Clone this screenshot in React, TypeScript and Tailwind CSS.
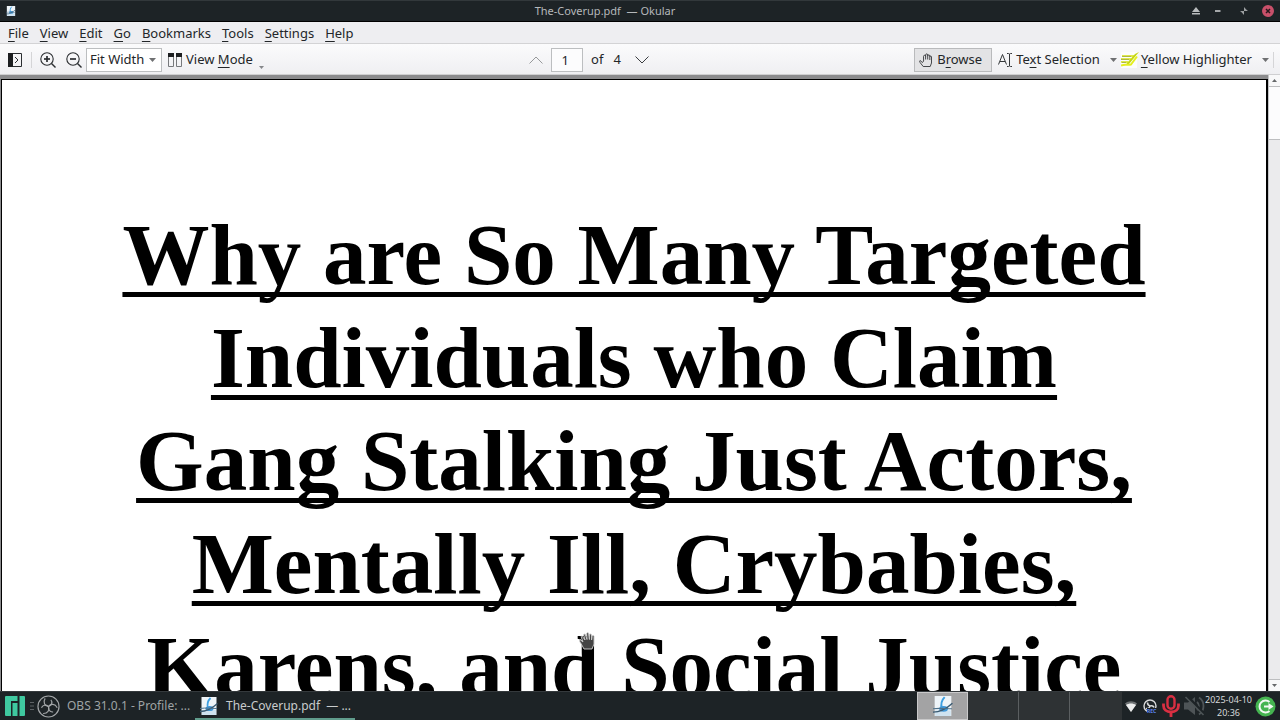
import { useState } from "react";
import type { ReactNode } from "react";

const menus = ["File", "View", "Edit", "Go", "Bookmarks", "Tools", "Settings", "Help"];

const titleLines = [
  "Why are So Many Targeted",
  "Individuals who Claim",
  "Gang Stalking Just Actors,",
  "Mentally Ill, Crybabies,",
  "Karens, and Social Justice",
];

function Key({ children }: { children: ReactNode }) {
  return (
    <span className="underline decoration-1 underline-offset-3 [text-decoration-skip-ink:none]">
      {children}
    </span>
  );
}

function Caret() {
  return (
    <svg width="7" height="4" viewBox="0 0 7 4" fill="#6f7072">
      <path d="M0 0h7L3.5 4z" />
    </svg>
  );
}

function OkularIcon({ size }: { size: number }) {
  return (
    <svg className="shrink-0" width={size} height={size} viewBox="0 0 18 18">
      <path d="M1.500 0h15v18h-15z" fill="#eef4f8" />
      <path d="M2 13h14v5H2z" fill="#cfe2ef" />
      <path d="M10.500 1C7.500 4 7 8 8 11.500" fill="none" stroke="#3d9fe0" strokeWidth="1.800" />
      <ellipse cx="9.500" cy="11.500" rx="4" ry="2.600" fill="#3f97d8" />
      <path d="M0 14.500c6 0 12-3 17.500-8" fill="none" stroke="#3a5a72" strokeWidth="1.300" />
      <path d="M0 11.500c6-1 11 0 17 0" fill="none" stroke="#4d7089" strokeWidth="1" />
    </svg>
  );
}

function ObsIcon({ size, color }: { size: number; color: string }) {
  return (
    <svg className="shrink-0" width={size} height={size} viewBox="0 0 24 24" fill="none" stroke={color} strokeWidth="1.200">
      <circle cx="12" cy="12" r="11" />
      {[0, 120, 240].map((a) => (
        <path key={a} transform={`rotate(${a} 12 12)`} d="M12 12c-4-.5-6-4.500-3.500-8.500M12 12c3.500-1.500 4.500-4.500 2.500-7" />
      ))}
    </svg>
  );
}

function ZoomIcon({ plus }: { plus?: boolean }) {
  return (
    <svg width="16" height="16" viewBox="0 0 16 16" fill="none" stroke="#2b2e31">
      <circle cx="7" cy="7" r="6.200" strokeWidth="1.100" />
      <path d="M11.500 11.500l4 4" strokeWidth="1.400" />
      <path d="M4 7h6" strokeWidth="1.700" />
      {plus && <path d="M7 4v6" strokeWidth="1.700" />}
    </svg>
  );
}

function TitleBar() {
  return (
    <header className="flex h-[22px] shrink-0 items-center border-t border-b border-t-[#32383b] border-b-black bg-[#1d2326] px-1.5">
      <div className="w-16">
        <OkularIcon size={10} />
      </div>
      <h1 className="flex-1 text-center text-[11px] whitespace-pre text-[#b5b8ba]">The-Coverup.pdf  — Okular</h1>
      <div className="flex w-[134px] items-center justify-end gap-3.5">
        <button aria-label="Keep above">
          <svg width="8" height="8" viewBox="0 0 8 8" fill="#b8bbbd">
            <path d="M4 0l4 5H0zM0 6h8v1.500H0z" />
          </svg>
        </button>
        <button aria-label="Minimize">
          <svg width="8" height="8" viewBox="0 0 8 8" fill="#a4a7a9">
            <path d="M1 3h5.500v2H1z" />
          </svg>
        </button>
        <button aria-label="Restore" className="ml-1">
          <svg width="8" height="8" viewBox="0 0 8 8" fill="#9c9fa1">
            <path d="M4 0v4h4L6.500 2.700 5.300 1.500zM4 8V4H0l1.500 1.300 1.200 1.200z" />
          </svg>
        </button>
        <button aria-label="Close">
          <svg width="12" height="12" viewBox="0 0 12 12">
            <circle cx="6" cy="6" r="6" fill="#c8506a" />
            <path d="M4 4l4 4M8 4L4 8" stroke="#26181c" strokeWidth="1.500" />
          </svg>
        </button>
      </div>
    </header>
  );
}

function MenuBar() {
  return (
    <nav className="flex h-[22px] shrink-0 items-center gap-[11px] border-b border-[#d3d3d5] bg-[#eeeef1] px-2 pt-0.5 text-[13px] text-[#232629]">
      {menus.map((m) => (
        <button key={m}>
          <Key>{m[0]}</Key>
          {m.slice(1)}
        </button>
      ))}
    </nav>
  );
}

function ToolBar() {
  const [page, setPage] = useState("1");

  return (
    <div className="flex h-[31px] shrink-0 items-center justify-between border-b border-[#cfcfd1] bg-linear-to-b from-[#fbfbfc] to-[#efeff2] pt-0.5 pr-1.5 pl-2 text-[13px] text-[#232629]">
      <div className="flex items-center">
        <button aria-label="Show sidebar">
          <svg width="15" height="14" viewBox="0 0 15 14" fill="none" stroke="#2b2e31">
            <path d="M.5.5h13v13H.5z" />
            <path d="M0 0h5v14H0z" fill="#1c1e20" stroke="none" />
            <path d="M7 4l3 3-3 3" />
          </svg>
        </button>
        <span className="mx-2 h-4 w-px bg-[#d5d5d7]" />
        <button aria-label="Zoom in">
          <ZoomIcon plus />
        </button>
        <button aria-label="Zoom out" className="ml-2.5">
          <ZoomIcon />
        </button>
        <div className="relative ml-1 flex items-center">
          <select
            aria-label="Zoom"
            className="h-6 w-[76px] appearance-none border border-[#bcbec0] bg-white pl-[3px] outline-none"
          >
            <option>Fit Width</option>
            <option>Fit Page</option>
            <option>100%</option>
          </select>
          <span className="pointer-events-none absolute right-1.5">
            <Caret />
          </span>
        </div>
        <button className="ml-1.5 flex items-center gap-1">
          <svg width="14" height="14" viewBox="0 0 14 14" fill="none" stroke="#77797c">
            <path d="M.5.5h5v13h-5zM8.500.5h5v13h-5z" />
            <path d="M0 0h6v4H0zM8 0h6v4H8z" fill="#1c1e20" stroke="none" />
          </svg>
          <span>
            View <Key>M</Key>ode
          </span>
        </button>
        <svg className="mt-3.5 ml-1.5" width="5" height="3" viewBox="0 0 5 3" fill="#85878a">
          <path d="M0 0h5L2.500 3z" />
        </svg>
      </div>

      <div className="flex items-center">
        <button aria-label="Previous page">
          <svg width="14" height="8" viewBox="0 0 14 8" fill="none" stroke="#97999b">
            <path d="M.5 7.500L7 1l6.500 6.500" />
          </svg>
        </button>
        <input
          aria-label="Page"
          value={page}
          onChange={(e) => setPage(e.target.value)}
          className="mr-2 ml-2 h-6 w-8 border border-[#bcbec0] bg-[#fcfcfd] pr-1 text-center outline-none"
        />
        <span>of</span>
        <span className="mr-3.5 ml-2.5">4</span>
        <button aria-label="Next page">
          <svg width="14" height="8" viewBox="0 0 14 8" fill="none" stroke="#3a3d40">
            <path d="M.5.5L7 7 13.500.5" />
          </svg>
        </button>
      </div>

      <div className="flex items-center">
        <button className="mr-1.5 flex h-6 w-[78px] items-center gap-1 border border-[#b9babc] bg-[#e3e3e5] pl-1">
          <svg width="14" height="15" viewBox="0 0 14 15" fill="none" stroke="#34373a" strokeWidth=".9" strokeLinejoin="round">
            <path d="M3.500 9.500L1 7.500C.3 8 .4 8.700 1 9.400l3.200 4.100h7L12.500 10V4c0-1.300-1.700-1.300-1.700 0V3c0-1.500-2.100-1.500-2.100 0V2c0-1.500-2.100-1.500-2.100 0v1.200c-.2-1.300-2.100-1.200-2.100.2l.1 4.600z" />
            <path d="M6.600 3v3.500M8.700 3v3.500M10.800 4v3" />
          </svg>
          <span>
            B<Key>r</Key>owse
          </span>
        </button>
        <button className="flex items-center gap-1">
          <svg width="14" height="14" viewBox="0 0 14 14" fill="none" stroke="#34373a">
            <path d="M.5 11.500L4.500 1.500l4 10M2 8.500h5" />
            <path d="M9 .5h1.500l1 .5 1-.5H14M9 13.500h1.500l1-.5 1 .5H14M11.500 1v12" />
          </svg>
          <span>
            Te<Key>x</Key>t Selection
          </span>
        </button>
        <button aria-label="Selection tools" className="mr-1 ml-2.5">
          <Caret />
        </button>
        <button className="flex items-center gap-0.5">
          <svg width="18" height="18" viewBox="0 0 18 18" fill="none">
            <path d="M0 1h16v16H0z" fill="#fcfcfc" />
            <path d="M1 5h12M0 8h10M0 11h7" stroke="#dfe94a" strokeWidth="2" />
            <path d="M1 5.500h9M0 8.500h8M1 11.500h4" stroke="#8d9443" strokeWidth=".6" />
            <path d="M18 1l-4 2-8 9-1 2 3-1z" fill="#c5d614" />
            <path d="M0 14.500c4-1.500 7 0 10-1l6-8" stroke="#e4ef1e" strokeWidth="2" />
          </svg>
          <span>
            <Key>Y</Key>ellow Highlighter
          </span>
        </button>
        <button aria-label="Highlighter tools" className="mr-1 ml-2.5">
          <Caret />
        </button>
        <span className="h-4 w-px bg-[#d5d5d7]" />
      </div>
    </div>
  );
}

function ScrollBar() {
  return (
    <div className="flex w-3 shrink-0 flex-col border-l border-[#c4c5c7] bg-[#ebebed]">
      <button aria-label="Scroll up" className="flex h-3 items-center justify-center border-b border-[#bdbec0] bg-[#f8f8f9]">
        <svg width="5" height="3" viewBox="0 0 5 3" fill="#66686a">
          <path d="M0 3h5L2.500 0z" />
        </svg>
      </button>
      <div className="h-[53px] border-b border-[#bdbec0] bg-[#fcfcfd]" />
      <div className="flex-1" />
      <button aria-label="Scroll down" className="flex h-3 items-center justify-center border-t border-[#bdbec0] bg-[#f8f8f9]">
        <svg width="5" height="3" viewBox="0 0 5 3" fill="#66686a">
          <path d="M0 0h5L2.500 3z" />
        </svg>
      </button>
    </div>
  );
}

function DocumentView() {
  return (
    <main className="relative flex min-h-0 flex-1">
      <div className="min-w-0 flex-1 overflow-hidden bg-[#8b8b8d] pt-1 pl-px">
        <article className="h-full border-t border-r-2 border-l border-black bg-white pt-[123px]">
          <h2 className="text-center font-['Liberation_Serif',serif] text-[87px] leading-[103px] font-bold text-black underline decoration-[5px] underline-offset-8 [text-decoration-skip-ink:none]">
            {titleLines.map((line) => (
              <span key={line} className="block whitespace-nowrap">
                {line}
              </span>
            ))}
          </h2>
        </article>
      </div>
      <ScrollBar />
      {/* Hand cursor */}
      <svg className="absolute top-[557px] left-[579px]" width="16" height="19" viewBox="0 0 16 19">
        <path
          d="M4 10L1 7.500C0 9 1 10 2 11.500L5 17h8l2-5V4.500c0-1.500-1.800-1.500-1.800 0l-.6 3.500-.2-5c0-1.500-2-1.500-2 0v4.500l-.7-5.700c0-1.500-2.200-1.500-2 0L8 7.500 6.500 3c-.3-1.500-2-1-1.800.3L6 8 3.500 4.500C2.800 3.500 1.800 4.300 2.200 5z"
          fill="#444"
          stroke="#d0d0d0"
          strokeWidth=".9"
        />
      </svg>
    </main>
  );
}

function TaskBar() {
  return (
    <footer className="flex h-[29px] shrink-0 items-center border-t border-[#34393c] bg-[#1d2326] pl-[5px] text-[#9fa3a5]">
      <button aria-label="Application launcher">
        <svg width="20" height="20" viewBox="0 0 20 20" fill="#3fc9a0">
          <path d="M1 0h11.500v5H6v15H1a1 1 0 0 1-1-1V1a1 1 0 0 1 1-1zM7.500 7h5v13h-5zM14.500 0H19a1 1 0 0 1 1 1v18a1 1 0 0 1-1 1h-4.500z" />
        </svg>
      </button>
      <svg className="ml-[5px]" width="4" height="10" viewBox="0 0 4 10" stroke="#5d6265">
        <path d="M0 1.500h4M0 5h4M0 8.500h4" />
      </svg>
      <button className="ml-[3px] flex w-[158px] items-center gap-[7px]">
        <ObsIcon size={23} color="#a3a6a8" />
        <span className="text-[12px] whitespace-nowrap">OBS 31.0.1 - Profile: ...</span>
      </button>
      <button className="flex h-full w-40 items-center gap-2 border-b-2 border-[#609c8c] pt-0.5 pl-[5px]">
        <OkularIcon size={18} />
        <span className="text-[12px] whitespace-pre text-[#c9cccd]">The-Coverup.pdf  — ...</span>
      </button>

      <div className="ml-auto flex h-full divide-x divide-[#5b5f61] bg-[#2e3234]">
        <button aria-label="Desktop 1" className="flex w-[51px] items-center justify-center border border-[#c9c9ca] bg-[#a3a3a4]">
          <OkularIcon size={20} />
        </button>
        <button aria-label="Desktop 2" className="w-[51px]" />
        <button aria-label="Desktop 3" className="w-[51px]" />
        <button aria-label="Desktop 4" className="w-[52px]" />
      </div>

      <div className="flex items-center pr-1 pl-[3px]">
        <svg width="12" height="11" viewBox="0 0 12 11">
          <path d="M0 2.500C3.500-.5 8.500-.5 12 2.500L6 11z" fill="#6d7173" />
          <path d="M1 4C4 2 8 2 11 4l-5 7z" fill="#eceded" />
        </svg>
        <svg className="ml-1.5" width="15" height="15" viewBox="0 0 15 15" fill="none">
          <circle cx="7" cy="7" r="6" stroke="#d9dadb" strokeWidth="1.400" />
          <path d="M4.500 3.500c0 2 1 3 2.500 3.500 2-.8 3.500 0 4 1.500M7 7c-.3 2-2 3-4 2.500" stroke="#d9dadb" strokeWidth="1.600" />
          <path d="M4 9h11v6H4z" fill="#1d2326" />
          <text x="4" y="14" fontSize="5" fontWeight="bold" fill="#5b83ee">
            REC
          </text>
        </svg>
        <svg className="ml-1" width="18" height="22" viewBox="0 0 18 22" fill="none" stroke="#d92f42">
          <rect x="5.500" y="1.200" width="7" height="12.500" rx="3.500" strokeWidth="2.400" />
          <path d="M1.500 8.500v2c0 4 3 6.500 7.500 6.500s7.500-2.500 7.500-6.500v-2M9 17v5" strokeWidth="2.800" />
        </svg>
        <svg className="ml-1" width="21" height="20" viewBox="0 0 21 20" fill="none" stroke="#4e5457">
          <path d="M0 6.500h4L11 1v18l-7-5.500H0z" fill="#4e5457" stroke="none" />
          <path d="M13 6c2.500 2 2.500 6 0 8M15 1.500c6 4 6 13 0 17" strokeWidth="1.800" />
          <path d="M3 0l18 19" stroke="#1d2326" strokeWidth="3" />
          <path d="M1.500 1l18 18" strokeWidth="1.600" />
        </svg>
        <div className="flex flex-col text-center text-[9px] leading-[13px] text-[#d6d8d9]">
          <span>2025-04-10</span>
          <span>20:36</span>
        </div>
        <svg className="ml-[3px]" width="21" height="21" viewBox="0 0 21 21" fill="none">
          <circle cx="10.500" cy="10.500" r="10" fill="#45b450" />
          <path d="M14.500 6A6 6 0 1 0 14.500 15" stroke="#f2f8f2" strokeWidth="2" />
          <path d="M9 10.500h6" stroke="#f2f8f2" strokeWidth="2" />
          <path d="M13.500 7l5 3.500-5 3.500z" fill="#f2f8f2" />
        </svg>
      </div>
    </footer>
  );
}

export default function App() {
  return (
    <div className="flex h-screen flex-col overflow-hidden bg-white font-['Noto_Sans',sans-serif]">
      <TitleBar />
      <MenuBar />
      <ToolBar />
      <DocumentView />
      <TaskBar />
    </div>
  );
}
